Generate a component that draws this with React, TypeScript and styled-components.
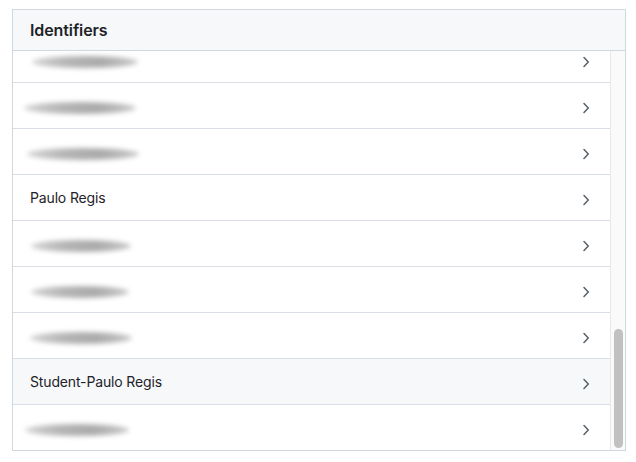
import React, { useLayoutEffect, useRef, useState } from "react";
import styled, { createGlobalStyle } from "styled-components";

const Global = createGlobalStyle`
  html, body { margin: 0; padding: 0; background: #ffffff; }
  body { font-family: Inter, "Noto Sans", "Liberation Sans", sans-serif; color: #1f2328; }
  * { box-sizing: border-box; }
`;

const Panel = styled.section`
  margin: 9px 0 0 12px;
  width: 614px;
  height: 442px;
  border: 1px solid #d0d7de;
  display: flex;
  flex-direction: column;
  background: #ffffff;
`;

const Header = styled.header`
  height: 41px;
  flex: none;
  display: flex;
  align-items: center;
  padding: 0 17px;
  background: #f6f8fa;
  border-bottom: 1px solid #d0d7de;
  font-size: 16px;
  font-weight: 600;
  color: #1f2328;
  letter-spacing: -0.1px;
`;

const Body = styled.div`
  flex: 1;
  min-height: 0;
  display: flex;
`;

const List = styled.ul`
  list-style: none;
  margin: 0;
  padding: 0;
  flex: 1;
  overflow-y: scroll;
  scrollbar-width: none;
  &::-webkit-scrollbar { display: none; }
`;

const Track = styled.div`
  width: 15px;
  flex: none;
  background: #fafafa;
  border-left: 1px solid #e8e8e8;
  display: flex;
  flex-direction: column;
  justify-content: flex-end;
  padding: 0 2px 2px 2px;
`;

const Thumb = styled.div`
  width: 9px;
  margin-left: 1px;
  border-radius: 5px;
  background: #c1c1c1;
`;

const Row = styled.li<{ $active?: boolean }>`
  height: 46px;
  display: flex;
  align-items: center;
  justify-content: space-between;
  padding: 0 20px 0 17px;
  border-bottom: 1px solid #d8dee4;
  background: ${(p) => (p.$active ? "#f6f8fa" : "#ffffff")};
  font-size: 14px;
  color: #1f2328;
  cursor: pointer;

  &:last-child { border-bottom: none; height: 45px; }
`;

const Name = styled.span`
  letter-spacing: -0.15px;
`;

const Smudge = styled.span<{ $w: number; $dx: number }>`
  display: block;
  width: ${(p) => p.$w}px;
  height: 12px;
  margin-left: ${(p) => p.$dx}px;
  margin-top: 4px;
  border-radius: 50%;
  background: linear-gradient(90deg, #d2d2d2 0%, #b4b4b4 35%, #aaaaaa 65%, #c6c6c6 100%);
  filter: blur(2.4px);
`;

const ChevronBox = styled.span`
  display: flex;
  margin-top: 4px;
`;

const Chevron = () => (
  <ChevronBox>
    <svg width="8" height="12" viewBox="0 0 8 12" fill="none">
      <path d="M2 1.5 L6.3 6 L2 10.5" stroke="#57606a" strokeWidth="1.5" strokeLinecap="round" strokeLinejoin="round" />
    </svg>
  </ChevronBox>
);

type Item = { name?: string; w: number; dx: number; active?: boolean };

const visible: Item[] = [
  { w: 106, dx: 2 },
  { w: 112, dx: -6 },
  { w: 112, dx: -3 },
  { name: "Paulo Regis", w: 0, dx: 0 },
  { w: 100, dx: 1 },
  { w: 98, dx: 1 },
  { w: 102, dx: 0 },
  { name: "Student-Paulo Regis", w: 0, dx: 0, active: true },
  { w: 104, dx: -5 },
];

const hidden: Item[] = Array.from({ length: 20 }, (_, i) => ({ w: 90 + ((i * 7) % 25), dx: 0 }));

const items = [...hidden, ...visible];

export default function App() {
  const ref = useRef<HTMLUListElement>(null);
  const [thumb, setThumb] = useState(118);
  useLayoutEffect(() => {
    const el = ref.current;
    if (!el) return;
    el.scrollTop = el.scrollHeight;
    setThumb(Math.round((el.clientHeight * el.clientHeight) / el.scrollHeight));
  }, []);
  return (
    <>
      <Global />
      <Panel>
        <Header>Identifiers</Header>
        <Body>
          <List ref={ref}>
            {items.map((it, i) => (
              <Row key={i} $active={it.active}>
                {it.name ? <Name>{it.name}</Name> : <Smudge $w={it.w} $dx={it.dx} />}
                <Chevron />
              </Row>
            ))}
          </List>
          <Track>
            <Thumb style={{ height: thumb }} />
          </Track>
        </Body>
      </Panel>
    </>
  );
}
